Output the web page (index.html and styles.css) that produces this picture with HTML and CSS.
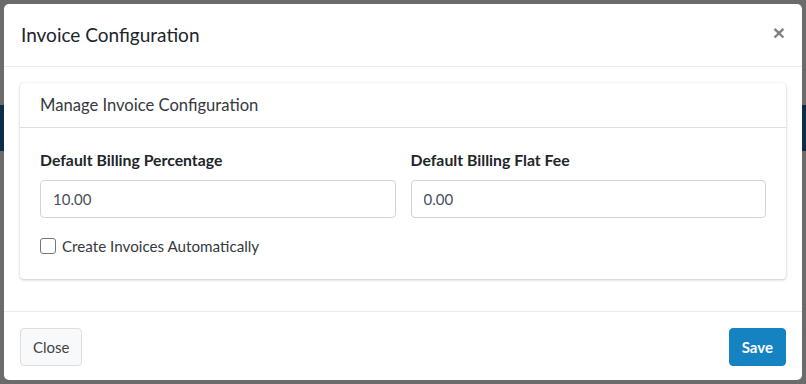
FILE: index.html
```html
<!DOCTYPE html>
<html lang="en">
<head>
  <meta charset="UTF-8" />
  <meta name="viewport" content="width=device-width, initial-scale=1.0"/>
  <title>Invoice Configuration</title>
  <link rel="stylesheet" href="styles.css">
</head>
<body>
  <!-- page behind the overlay -->
  <div class="page">
    <div class="navbar-band"></div>
  </div>

  <div class="modal">
    <div class="modal-header">
      <h4 class="modal-title">Invoice Configuration</h4>
      <button class="close" type="button">&times;</button>
    </div>

    <div class="modal-body">
      <div class="card">
        <div class="card-header">Manage Invoice Configuration</div>
        <div class="card-body">
          <div class="form-row">
            <div class="form-group">
              <label class="field-label">Default Billing Percentage</label>
              <input class="form-control" type="text" value="10.00">
            </div>
            <div class="form-group">
              <label class="field-label">Default Billing Flat Fee</label>
              <input class="form-control" type="text" value="0.00">
            </div>
          </div>
          <label class="check">
            <span class="check-box"></span>
            <span>Create Invoices Automatically</span>
          </label>
        </div>
      </div>
    </div>

    <div class="modal-footer">
      <button class="btn btn-default" type="button">Close</button>
      <button class="btn btn-primary" type="button">Save</button>
    </div>
  </div>
</body>
</html>
```

FILE: styles.css
```css
body, html {
  margin: 0;
  padding: 0;
  height: 100%;
  font-family: Lato, 'Open Sans', sans-serif;
  background: #6b6b6b;
  color: #212529;
}

.page {
  height: 100%;
  overflow: hidden;
}

.navbar-band {
  margin-top: 105px;
  height: 46px;
  background: #0d2e4a;
}

.modal {
  position: absolute;
  top: 4px;
  left: 4px;
  width: 798px;
  height: 376px;
  background: #fff;
  border-radius: 5px;
  display: flex;
  flex-direction: column;
  overflow: hidden;
}

.modal-header {
  display: flex;
  justify-content: space-between;
  align-items: center;
  padding: 16px 16px 16px 17px;
  border-bottom: 1px solid #e9ecef;
}

.modal-title {
  margin: 0;
  font-size: 19px;
  font-weight: 400;
  line-height: 30px;
}

.close {
  border: none;
  background: none;
  margin: -6px 0 0;
  padding: 0 1px 0 0;
  font-family: Arial, 'Liberation Sans', sans-serif;
  font-size: 21px;
  font-weight: 700;
  line-height: 1;
  color: #000;
  opacity: 0.5;
  cursor: pointer;
}

.modal-body {
  padding: 16px 16px 31px;
}

.card {
  border-radius: 4px;
  box-shadow: 0 0 1px rgba(0, 0, 0, 0.125), 0 1px 3px rgba(0, 0, 0, 0.2);
}

.card-header {
  padding: 10px 20px;
  font-size: 16.6px;
  line-height: 24px;
  color: #343a40;
  border-bottom: 1px solid rgba(0, 0, 0, 0.125);
}

.card-body {
  padding: 20px 20px 21px;
}

.form-row {
  display: grid;
  grid-template-columns: 1fr 1fr;
  gap: 15px;
}

.form-group {
  margin-bottom: 16px;
}

.field-label {
  display: block;
  font-size: 15.8px;
  font-weight: 700;
  line-height: 24px;
  margin-bottom: 8px;
}

.form-control {
  box-sizing: border-box;
  width: 100%;
  height: 38px;
  padding: 6px 12px;
  font-family: inherit;
  font-size: 15px;
  color: #495057;
  border: 1px solid #ced4da;
  border-radius: 4px;
  outline: none;
}

.check {
  display: flex;
  align-items: center;
  gap: 6px;
  font-size: 15.2px;
  line-height: 24px;
  color: #343a40;
}

.check-box {
  box-sizing: border-box;
  width: 16px;
  height: 16px;
  border: 1.5px solid #767676;
  border-radius: 3px;
  background: #fff;
}

.modal-footer {
  margin-top: auto;
  display: flex;
  justify-content: space-between;
  padding: 16px 16px 14px;
  border-top: 1px solid #e9ecef;
}

.btn {
  height: 38px;
  padding: 0 12px;
  font-family: inherit;
  font-size: 15px;
  border-radius: 4px;
  cursor: pointer;
}

.btn-default {
  background: #f8f9fa;
  color: #444;
  border: 1px solid #ddd;
}

.btn-primary {
  background: #1582c2;
  color: #fff;
  border: 1px solid #1582c2;
  font-weight: 700;
}
```
